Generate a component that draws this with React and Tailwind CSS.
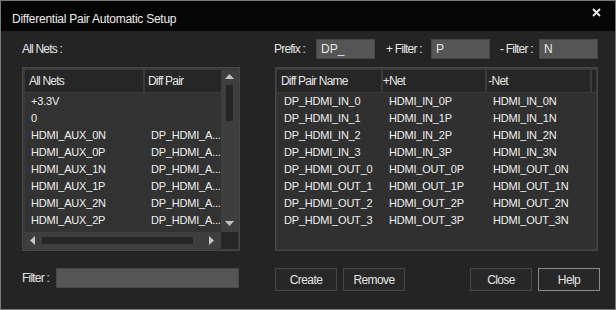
const allNets = [
  ["+3.3V", ""],
  ["0", ""],
  ["HDMI_AUX_0N", "DP_HDMI_A..."],
  ["HDMI_AUX_0P", "DP_HDMI_A..."],
  ["HDMI_AUX_1N", "DP_HDMI_A..."],
  ["HDMI_AUX_1P", "DP_HDMI_A..."],
  ["HDMI_AUX_2N", "DP_HDMI_A..."],
  ["HDMI_AUX_2P", "DP_HDMI_A..."],
];

const pairs = [
  ["DP_HDMI_IN_0", "HDMI_IN_0P", "HDMI_IN_0N"],
  ["DP_HDMI_IN_1", "HDMI_IN_1P", "HDMI_IN_1N"],
  ["DP_HDMI_IN_2", "HDMI_IN_2P", "HDMI_IN_2N"],
  ["DP_HDMI_IN_3", "HDMI_IN_3P", "HDMI_IN_3N"],
  ["DP_HDMI_OUT_0", "HDMI_OUT_0P", "HDMI_OUT_0N"],
  ["DP_HDMI_OUT_1", "HDMI_OUT_1P", "HDMI_OUT_1N"],
  ["DP_HDMI_OUT_2", "HDMI_OUT_2P", "HDMI_OUT_2N"],
  ["DP_HDMI_OUT_3", "HDMI_OUT_3P", "HDMI_OUT_3N"],
];

const label = "text-[12px] tracking-[-0.8px] text-[#e4e4e4] whitespace-nowrap";
const input =
  "h-[20px] bg-[#555555] border border-[#464646] text-[12px] text-[#e8e8e8] pl-[4px] leading-[18px] outline-none";

function Button({ children, primary }) {
  return (
    <button
      className={
        "w-[62px] h-[23px] bg-[#272727] border text-[12px] tracking-[-0.6px] text-[#e4e4e4] " +
        (primary ? "border-[#8a8a8a]" : "border-[#474747]")
      }
    >
      {children}
    </button>
  );
}

export default function App() {
  return (
    <div
      className="w-[616px] h-[310px] bg-[#242424] border border-[#7a7a7a] flex flex-col"
      style={{ fontFamily: '"Liberation Sans", Arial, sans-serif' }}
    >
      {/* title bar */}
      <div className="h-[30px] bg-[#050505] flex items-start justify-between pl-[11px] pr-[14px] shrink-0">
        <span className="mt-[10px] text-[12px] leading-[16px] tracking-[-0.25px] text-[#ececec]">
          Differential Pair Automatic Setup
        </span>
        <svg width="9" height="9" viewBox="0 0 9 9" className="mt-[7px]">
          <path d="M1 1L8 8M8 1L1 8" stroke="#f2f2f2" strokeWidth="1.8" />
        </svg>
      </div>

      {/* top row */}
      <div className="flex items-center pl-[21px] mt-[8px] h-[20px]">
        <div className={label + " w-[218px]"}>All Nets :</div>
        <div className="flex items-center ml-[34px]">
          <span className={label + " w-[42px]"}>Prefix :</span>
          <div className={input + " w-[59px]"}>DP_</div>
          <span className={label + " w-[45px] ml-[11px]"}>+ Filter :</span>
          <div className={input + " w-[59px]"}>P</div>
          <span className={label + " w-[39px] ml-[10px]"}>- Filter :</span>
          <div className={input + " w-[59px]"}>N</div>
        </div>
      </div>

      {/* lists */}
      <div className="flex pl-[21px] mt-[8px] gap-[35px]">
        {/* all nets list */}
        <div className="w-[218px] h-[184px] border border-[#474747] bg-[#3b3b3b] pt-[2px] pl-[2px] pr-[1px] pb-[1px] grid grid-cols-[196px_17px] grid-rows-[162px_17px]">
          <div className="overflow-hidden bg-[#323232]">
            <div className="flex gap-[2px] h-[23px] bg-[#3b3b3b] pb-[1px]">
              <div className={label + " w-[118px] bg-[#262626] pl-[4px] flex items-center"}>All Nets</div>
              <div className={label + " w-[76px] bg-[#262626] pl-[3px] flex items-center"}>Diff Pair</div>
            </div>
            {allNets.map(([a, b], i) => (
              <div key={i} className="flex h-[17px] items-center text-[11px] tracking-[-0.2px] text-[#efefef] whitespace-nowrap">
                <span className="w-[120px] pl-[6px]">{a}</span>
                <span className="w-[76px] pl-[6px] overflow-hidden">{b}</span>
              </div>
            ))}
          </div>
          {/* vertical scrollbar */}
          <div className="bg-[#3e3e3e] flex flex-col items-center">
            <svg width="9" height="5" viewBox="0 0 9 5" className="mt-[4px]">
              <path d="M4.5 0L9 5H0Z" fill="#c4c4c4" />
            </svg>
            <div className="w-[7px] h-[36px] bg-[#262626] mt-[6px]" />
            <div className="flex-1" />
            <svg width="9" height="5" viewBox="0 0 9 5" className="mb-[6px]">
              <path d="M0 0H9L4.5 5Z" fill="#c4c4c4" />
            </svg>
          </div>
          {/* horizontal scrollbar */}
          <div className="bg-[#3e3e3e] flex items-center">
            <svg width="5" height="9" viewBox="0 0 5 9" className="ml-[5px]">
              <path d="M5 0V9L0 4.5Z" fill="#c4c4c4" />
            </svg>
            <div className="w-[151px] h-[7px] bg-[#262626] ml-[7px]" />
            <div className="flex-1" />
            <svg width="5" height="9" viewBox="0 0 5 9" className="mr-[7px]">
              <path d="M0 0L5 4.5L0 9Z" fill="#c4c4c4" />
            </svg>
          </div>
          <div className="bg-[#262626]" />
        </div>

        {/* diff pair list */}
        <div className="w-[323px] h-[184px] border border-[#474747] bg-[#3b3b3b] pt-[2px] pl-[1px] pr-[1px] pb-[1px]">
          <div className="h-full bg-[#303030] overflow-hidden">
            <div className="flex gap-[2px] h-[23px] bg-[#3b3b3b] pb-[1px]">
              <div className={label + " w-[104px] bg-[#262626] pl-[4px] flex items-center"}>Diff Pair Name</div>
              <div className={label + " w-[103px] bg-[#262626] flex items-center"}>+Net</div>
              <div className={label + " w-[103px] bg-[#262626] pl-[1px] flex items-center"}>-Net</div>
              <div className="w-[4px] bg-[#262626]" />
            </div>
            {pairs.map(([a, b, c], i) => (
              <div key={i} className="flex h-[17px] items-center text-[11px] tracking-[-0.2px] text-[#efefef] whitespace-nowrap">
                <span className="w-[106px] pl-[7px]">{a}</span>
                <span className="w-[105px] pl-[6px]">{b}</span>
                <span className="w-[105px] pl-[5px]">{c}</span>
              </div>
            ))}
          </div>
        </div>
      </div>

      {/* bottom row */}
      <div className="flex items-start pl-[21px] mt-[17px]">
        <div className="flex items-center w-[218px]">
          <span className={label + " w-[34px] h-[20px] flex items-center"}>Filter :</span>
          <div className={input + " w-[183px] bg-[#5a5a5a] border-[#484848]"} />
        </div>
        <div className="flex ml-[35px] gap-[6px]">
          <Button>Create</Button>
          <Button>Remove</Button>
        </div>
        <div className="flex ml-[65px] gap-[6px]">
          <Button>Close</Button>
          <Button primary>Help</Button>
        </div>
      </div>
    </div>
  );
}
